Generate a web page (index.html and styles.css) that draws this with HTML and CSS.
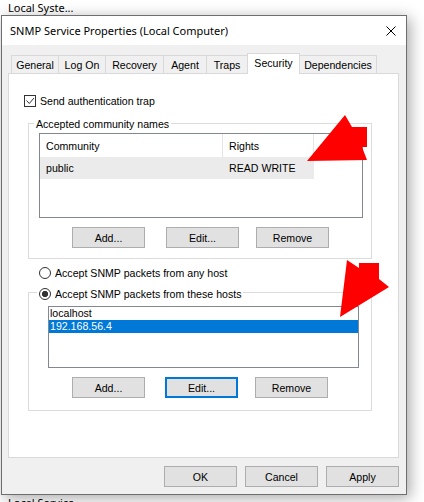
FILE: index.html
```html
<!DOCTYPE html>
<html>
<head>
<meta charset="utf-8">
<title>SNMP Service Properties</title>
<link rel="stylesheet" href="styles.css">
</head>
<body>
<div class="desk-label">Local Syste...</div>
<div class="window">
  <div class="titlebar">
    <span class="title">SNMP Service Properties (Local Computer)</span>
    <svg class="close" width="10" height="10" viewBox="0 0 10 10"><path d="M0.5 0.5 L9.5 9.5 M9.5 0.5 L0.5 9.5" stroke="#000" stroke-width="1" fill="none"/></svg>
  </div>
  <div class="tabs">
    <div class="tab tab-general">General</div>
    <div class="tab tab-logon">Log On</div>
    <div class="tab tab-recovery">Recovery</div>
    <div class="tab tab-agent">Agent</div>
    <div class="tab tab-traps">Traps</div>
    <div class="tab tab-security active">Security</div>
    <div class="tab tab-deps">Dependencies</div>
  </div>
  <div class="panel">
    <div class="check-row">
      <svg class="checkbox" width="12" height="12" viewBox="0 0 12 12"><rect x="0.5" y="0.5" width="11" height="11" fill="#fff" stroke="#333"/><path d="M2.5 5.5 L5.3 8.5 L10 3" fill="none" stroke="#333" stroke-width="1"/></svg>
      <span>Send authentication trap</span>
    </div>
    <div class="group group-community">
      <div class="group-label">Accepted community names</div>
      <div class="listview">
        <div class="lv-header">
          <div class="col col-name">Community</div>
          <div class="col col-rights">Rights</div>
        </div>
        <div class="lv-row hot">
          <div class="col col-name">public</div>
          <div class="col col-rights">READ WRITE</div>
        </div>
      </div>
      <div class="btn-row">
        <button class="btn">Add...</button>
        <button class="btn btn-edit">Edit...</button>
        <button class="btn btn-remove">Remove</button>
      </div>
    </div>
    <div class="radio-row">
      <span class="radio"></span>
      <span>Accept SNMP packets from any host</span>
    </div>
    <div class="group group-hosts">
      <div class="group-label radio-label">
        <span class="radio checked"></span>
        <span>Accept SNMP packets from these hosts</span>
      </div>
      <div class="listbox">
        <div class="lb-item">localhost</div>
        <div class="lb-item selected">192.168.56.4</div>
      </div>
      <div class="btn-row">
        <button class="btn">Add...</button>
        <button class="btn btn-edit focused">Edit...</button>
        <button class="btn btn-remove">Remove</button>
      </div>
    </div>
  </div>
  <div class="dialog-buttons">
    <button class="btn">OK</button>
    <button class="btn">Cancel</button>
    <button class="btn">Apply</button>
  </div>
</div>
<div class="desk-label">Local Service</div>
<svg class="annotations" width="424" height="502" viewBox="0 0 424 502">
  <polygon points="307,161 345,115 352,127 367,127 367,147 362,147 367,160" fill="#ff0000"/>
  <polygon points="347,260 359,268 359,263 379,263 379,279 389,287 340,317" fill="#ff0000"/>
</svg>
</body>
</html>
```

FILE: styles.css
```css
* { box-sizing: border-box; }

html, body {
  margin: 0;
  height: 502px;
  overflow: hidden;
  background: #fff;
}

body {
  position: relative;
  font-family: "Liberation Sans", Arial, sans-serif;
  font-size: 10.6px;
  color: #000;
}

.desk-label {
  height: 15px;
  line-height: 15px;
  padding-left: 8px;
  font-family: "Noto Sans", sans-serif;
  font-size: 11px;
  white-space: nowrap;
}

.window {
  margin-left: 1px;
  width: 406px;
  height: 480px;
  border: 1px solid #6e6e6e;
  background: #f0f0f0;
  box-shadow: 3px 3px 14px rgba(0, 0, 0, 0.35);
  display: flex;
  flex-direction: column;
}

.titlebar {
  height: 29px;
  flex: none;
  background: #fff;
  display: flex;
  align-items: center;
  justify-content: space-between;
  padding: 0 10px 0 8px;
}

.title {
  font-family: "Noto Sans", sans-serif;
  font-size: 11px;
  white-space: nowrap;
}

.close { display: block; }

.tabs {
  height: 28px;
  flex: none;
  display: flex;
  align-items: flex-end;
  padding-left: 9px;
}

.tab {
  height: 18px;
  border: 1px solid #d9d9d9;
  border-bottom: none;
  margin-left: -1px;
  background: #f0f0f0;
  display: flex;
  align-items: center;
  justify-content: center;
  white-space: nowrap;
}

.tab:first-child { margin-left: 0; }

.tab.active {
  height: 21px;
  margin-bottom: -1px;
  padding-bottom: 2px;
  background: #fff;
  position: relative;
  z-index: 1;
}

.tab-general { width: 48px; }
.tab-logon { width: 48px; }
.tab-recovery { width: 59px; }
.tab-agent { width: 44px; }
.tab-traps { width: 42px; }
.tab-security { width: 53px; }
.tab-deps { width: 78px; }

.panel {
  flex: none;
  margin: 0 7px 0 6px;
  height: 385px;
  border: 1px solid #d9d9d9;
  background: #fff;
  padding-top: 21px;
}

.check-row {
  display: flex;
  align-items: center;
  gap: 4px;
  height: 12px;
  margin-left: 15px;
  white-space: nowrap;
}

.checkbox { display: block; flex: none; }

.group {
  position: relative;
  border: 1px solid #dcdcdc;
  margin-left: 19px;
  width: 344px;
}

.group-community {
  margin-top: 16px;
  height: 136px;
}

.group-hosts {
  margin-top: 13px;
  height: 119px;
}

.group-label {
  position: absolute;
  top: -6px;
  left: 5px;
  padding: 0 2px;
  line-height: 13px;
  background: #fff;
  white-space: nowrap;
}

.radio-label {
  top: -5px;
  left: 8px;
  display: flex;
  align-items: center;
  gap: 4px;
  height: 12px;
}

.listview {
  margin: 9px 0 0 10px;
  width: 324px;
  height: 85px;
  border: 1px solid #828790;
  background: #fff;
}

.lv-header {
  display: flex;
  height: 23px;
}

.lv-header .col {
  border-right: 1px solid #e5e5e5;
}

.col {
  display: flex;
  align-items: center;
  padding-left: 6px;
  white-space: nowrap;
}

.col-name { width: 183px; }
.col-rights { width: 91px; }

.lv-row {
  display: flex;
  height: 22px;
  width: 274px;
}

.lv-row.hot { background: #ebebeb; }
.lv-row .col-name { width: 182px; }
.lv-row .col-rights { width: 92px; padding-left: 7px; }

.btn-row {
  display: flex;
  margin-top: 9px;
  padding-left: 43px;
}

.btn {
  width: 73px;
  height: 21px;
  padding: 0;
  border: 1px solid #adadad;
  background: #e1e1e1;
  font-family: inherit;
  font-size: inherit;
  color: #000;
  flex: none;
}

.btn-edit { margin-left: 21px; }
.btn-remove { margin-left: 17px; }
.group-hosts .btn-edit { margin-left: 20px; }

.btn.focused {
  border: 2px solid #0078d7;
}

.radio-row {
  display: flex;
  align-items: center;
  gap: 4px;
  height: 12px;
  margin: 8px 0 0 30px;
  white-space: nowrap;
}

.radio {
  display: block;
  flex: none;
  width: 12px;
  height: 12px;
  border: 1px solid #333;
  border-radius: 50%;
  background: #fff;
}

.radio.checked {
  background: radial-gradient(circle, #333 0 2.8px, #fff 3.4px);
}

.listbox {
  margin: 13px 0 0 19px;
  width: 311px;
  height: 62px;
  border: 1px solid #828790;
  background: #fff;
}

.lb-item {
  height: 13px;
  line-height: 13px;
  padding-left: 1px;
  white-space: nowrap;
}

.lb-item.selected {
  background: #0078d7;
  color: #fff;
}

.dialog-buttons {
  display: flex;
  justify-content: flex-end;
  gap: 8px;
  margin-top: 8px;
  padding-right: 7px;
}

.annotations {
  position: absolute;
  top: 0;
  left: 0;
  pointer-events: none;
}
```
